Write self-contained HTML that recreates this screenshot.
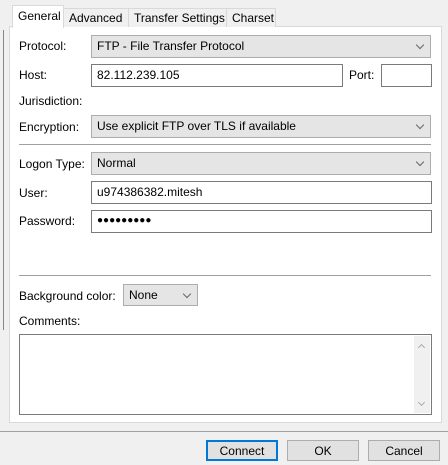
<!DOCTYPE html><html><head><style>
*{box-sizing:border-box}
body{margin:0;width:448px;height:465px;background:#f0f0f0;font-family:"Liberation Sans",sans-serif;font-size:12px;color:#000;position:relative;overflow:hidden}
.a{position:absolute}
.panel{left:9px;top:26px;width:433px;height:397px;background:#fff;border:1px solid #d9d9d9}
.tab{top:8px;height:19px;border:1px solid #d9d9d9;border-bottom:none;background:#f0f0f0;padding:2px 0 0 5px}
.lbl{left:19px}
.inp{background:#fff;border:1px solid #7a7a7a;padding:3px 0 0 5px;height:23px}
.cmb{background:#e5e5e5;border:1px solid #adadad;padding:3px 0 0 5px;height:23px}
.cmb:after{content:"";position:absolute;right:7px;top:6px;width:5px;height:5px;border-right:1px solid #666;border-bottom:1px solid #666;transform:rotate(45deg)}
.sep{left:19px;width:412px;height:1px;background:#a0a0a0}
.btn{top:440px;height:21px;width:72px;background:#e1e1e1;border:1px solid #adadad;text-align:center;padding-top:3px}
.ar{width:5px;height:5px;border-left:1px solid #aaa;border-top:1px solid #aaa}
</style></head><body>
<div class="a" style="left:3px;top:30px;width:1px;height:300px;background:#888"></div>
<div class="a panel"></div>
<div class="a tab" style="left:63px;width:66px">Advanced</div>
<div class="a tab" style="left:128px;width:99px">Transfer Settings</div>
<div class="a tab" style="left:226px;width:50px">Charset</div>
<div class="a tab" style="left:12px;top:5px;height:23px;width:52px;background:#fff;padding-top:3px">General</div>
<div class="a lbl" style="top:39px">Protocol:</div>
<div class="a cmb" style="left:91px;top:35px;width:340px">FTP - File Transfer Protocol</div>
<div class="a lbl" style="top:68px">Host:</div>
<div class="a inp" style="left:91px;top:64px;width:252px">82.112.239.105</div>
<div class="a" style="left:349px;top:68px">Port:</div>
<div class="a inp" style="left:381px;top:64px;width:51px"></div>
<div class="a lbl" style="top:94px">Jurisdiction:</div>
<div class="a lbl" style="top:120px">Encryption:</div>
<div class="a cmb" style="left:91px;top:115px;width:340px">Use explicit FTP over TLS if available</div>
<div class="a sep" style="top:144px"></div>
<div class="a lbl" style="top:157px">Logon Type:</div>
<div class="a cmb" style="left:91px;top:152px;width:340px">Normal</div>
<div class="a lbl" style="top:186px">User:</div>
<div class="a inp" style="left:91px;top:181px;width:341px">u974386382.mitesh</div>
<div class="a lbl" style="top:214px">Password:</div>
<div class="a inp" style="left:91px;top:210px;width:341px;font-size:10px;padding-top:4px;letter-spacing:0px">●●●●●●●●●</div>
<div class="a sep" style="top:275px"></div>
<div class="a lbl" style="top:289px">Background color:</div>
<div class="a cmb" style="left:123px;top:284px;width:75px;height:22px">None</div>
<div class="a lbl" style="top:314px">Comments:</div>
<div class="a inp" style="left:19px;top:334px;width:413px;height:81px"></div>
<div class="a" style="left:414px;top:336px;width:16px;height:77px;background:#f0f0f0"></div>
<div class="a ar" style="left:419px;top:345px;transform:rotate(45deg)"></div>
<div class="a ar" style="left:419px;top:400px;transform:rotate(225deg)"></div>
<div class="a" style="left:0;top:431px;width:448px;height:1px;background:#a0a0a0"></div>
<div class="a btn" style="left:206px;border:2px solid #0078d7;padding-top:2px">Connect</div>
<div class="a btn" style="left:287px">OK</div>
<div class="a btn" style="left:368px">Cancel</div>
</body></html>
